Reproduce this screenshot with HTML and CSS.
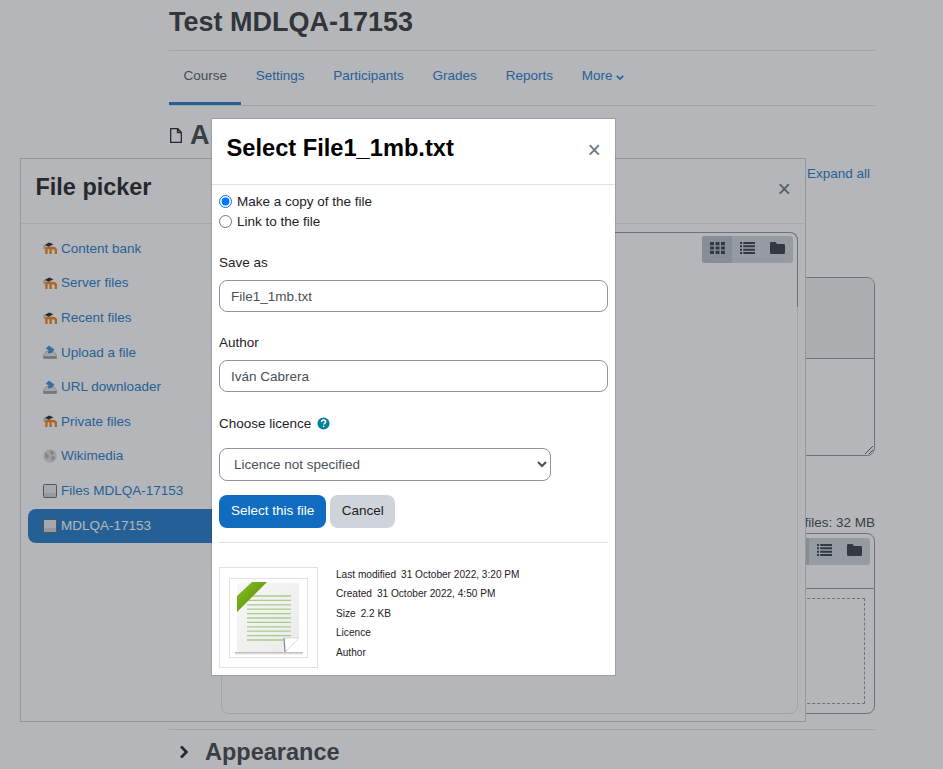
FILE: index.html
```html
<!DOCTYPE html>
<html lang="en">
<head>
<meta charset="utf-8">
<title>File picker</title>
<link rel="stylesheet" href="styles.css">
</head>
<body>
<svg class="defs" width="0" height="0">
  <symbol id="i-moodle" viewBox="0 0 14 12">
    <path d="M3.400 12V6h6.400q3.100 0 3.100 2.800V12M7.600 6v6" fill="none" stroke="#f98012" stroke-width="2.400"/>
    <path d="M1.600 3 6.200.4 10.400 2.200 5.800 4.800z" fill="#222"/>
    <path d="M1.200 3.200V7" stroke="#777" stroke-width=".8"/>
  </symbol>
  <symbol id="i-upload" viewBox="0 0 14 14">
    <path d="M3.500 6.500.6 10v3.500h12.800V10l-2.900-3.500z" fill="#e4e6e8" stroke="#9a9fa3" stroke-width=".7"/>
    <path d="M.6 11h12.800v2.500H.6z" fill="#9a9fa3"/>
    <path d="M2.800 3.600 6 .4l3.800 3.200 1.800.4-2.800 4-4 .4.800-2.900z" fill="#3d8ad6"/>
  </symbol>
  <symbol id="i-wiki" viewBox="0 0 14 14">
    <circle cx="7" cy="7" r="6.700" fill="#dcdcdc"/>
    <path d="M2 4l3 1 1 3-2 2-2-2zM7 1.500l3 .5 1 3-3 1zM8 8l3-1 1 2-3 3z" fill="#b2b2b2"/>
  </symbol>
  <symbol id="i-drive" viewBox="0 0 14 14">
    <rect x=".5" y=".5" width="13" height="13" rx=".8" fill="#e8eaec" stroke="#666" stroke-width="1"/>
    <rect x="1" y="9" width="12" height="4" fill="#d0d3d6"/>
  </symbol>
  <symbol id="i-grid" viewBox="0 0 15 13" preserveAspectRatio="none">
    <path d="M0 0h4v3.500H0zM5.500 0h4v3.500h-4zM11 0h4v3.500h-4zM0 4.800h4v3.400H0zM5.500 4.800h4v3.400h-4zM11 4.800h4v3.400h-4zM0 9.500h4V13H0zM5.500 9.500h4V13h-4zM11 9.500h4V13h-4z" fill="#343a40"/>
  </symbol>
  <symbol id="i-list" viewBox="0 0 15 13" preserveAspectRatio="none">
    <path d="M0 0h2v2.200H0zM3.200 0H15v2.200H3.200zM0 3.600h2v2.200H0zM3.200 3.600H15v2.200H3.200zM0 7.200h2v2.200H0zM3.200 7.200H15v2.200H3.200zM0 10.800h2V13H0zM3.200 10.800H15V13H3.200z" fill="#343a40"/>
  </symbol>
  <symbol id="i-folder" viewBox="0 0 15 12" preserveAspectRatio="none">
    <path d="M1.200 0h4.300l1.600 2h6.700q1.200 0 1.200 1.200v7.600q0 1.200-1.200 1.200H1.200Q0 12 0 10.800V1.200Q0 0 1.200 0z" fill="#343a40"/>
  </symbol>
</svg>

<div class="page">
  <h1 class="course-title">Test MDLQA-17153</h1>
  <nav class="tabs">
    <a class="tab tab-active">Course</a>
    <a class="tab">Settings</a>
    <a class="tab">Participants</a>
    <a class="tab">Grades</a>
    <a class="tab">Reports</a>
    <a class="tab">More <svg class="caret" viewBox="0 0 10 6"><path d="M1 1l4 4 4-4" fill="none" stroke="currentColor" stroke-width="2"/></svg></a>
  </nav>
  <div class="activity-head">
    <svg class="page-icon" viewBox="0 0 12 15"><path d="M.7.7h7l3.600 3.600v10H.7zM7.500.7v3.800h3.800" fill="none" stroke="#1d2125" stroke-width="1.300"/></svg>
    <h2 class="activity-title">A</h2>
  </div>
  <div class="expand-row"><a class="expand-all">Expand all</a></div>
  <div class="editor">
    <div class="editor-bar"></div>
    <div class="editor-text">
      <svg class="resize" viewBox="0 0 8 8"><path d="M0 8 8 0M4 8l4-4" stroke="#555" stroke-width="1"/></svg>
    </div>
  </div>
  <div class="limit">Maximum size for new files: 32 MB</div>
  <div class="manager">
    <div class="manager-bar">
      <div class="views views-manager">
        <span class="view view-on"><svg class="vi"><use href="#i-grid"/></svg></span>
        <span class="view"><svg class="vi"><use href="#i-list"/></svg></span>
        <span class="view"><svg class="vi"><use href="#i-folder"/></svg></span>
      </div>
    </div>
    <div class="manager-body"><div class="dropzone"></div></div>
  </div>
  <div class="section">
    <svg class="chevron" viewBox="0 0 10 14"><path d="M2 1.500 7.500 7 2 12.500" fill="none" stroke="#1d2125" stroke-width="2.600"/></svg>
    <h3 class="section-title">Appearance</h3>
  </div>
</div>

<section class="picker">
  <header class="picker-head">
    <h2 class="picker-title">File picker</h2>
    <span class="close picker-close">×</span>
  </header>
  <div class="picker-body">
    <ul class="repos">
      <li class="repo"><svg class="ri"><use href="#i-moodle"/></svg>Content bank</li>
      <li class="repo"><svg class="ri"><use href="#i-moodle"/></svg>Server files</li>
      <li class="repo"><svg class="ri"><use href="#i-moodle"/></svg>Recent files</li>
      <li class="repo"><svg class="ri"><use href="#i-upload"/></svg>Upload a file</li>
      <li class="repo"><svg class="ri"><use href="#i-upload"/></svg>URL downloader</li>
      <li class="repo"><svg class="ri"><use href="#i-moodle"/></svg>Private files</li>
      <li class="repo"><svg class="ri"><use href="#i-wiki"/></svg>Wikimedia</li>
      <li class="repo"><svg class="ri"><use href="#i-drive"/></svg>Files MDLQA-17153</li>
      <li class="repo repo-active"><svg class="ri"><use href="#i-drive"/></svg>MDLQA-17153</li>
    </ul>
    <div class="browser">
      <div class="browser-top">
        <div class="views">
          <span class="view view-on"><svg class="vi"><use href="#i-grid"/></svg></span>
          <span class="view"><svg class="vi"><use href="#i-list"/></svg></span>
          <span class="view"><svg class="vi"><use href="#i-folder"/></svg></span>
        </div>
      </div>
    </div>
  </div>
</section>

<div class="backdrop"></div>

<section class="dialog">
  <header class="dialog-head">
    <h2 class="dialog-title">Select File1_1mb.txt</h2>
    <span class="close dialog-close">×</span>
  </header>
  <form class="dialog-body">
    <label class="radio"><input type="radio" name="how" checked>Make a copy of the file</label>
    <label class="radio"><input type="radio" name="how">Link to the file</label>
    <div class="field field-first">
      <label class="field-label">Save as</label>
      <input class="text-input" type="text" value="File1_1mb.txt">
    </div>
    <div class="field">
      <label class="field-label">Author</label>
      <input class="text-input" type="text" value="Iván Cabrera">
    </div>
    <div class="licence-label">Choose licence
      <svg class="help" viewBox="0 0 14 14"><circle cx="7" cy="7" r="6.500" fill="#008196"/><path d="M4.900 5.400Q5 3.300 7.100 3.300q2.200 0 2.200 1.900 0 1.100-1.100 1.700-.8.5-.8 1.300" fill="none" stroke="#fff" stroke-width="1.600"/><rect x="6.300" y="9.200" width="1.600" height="1.700" fill="#fff"/></svg>
    </div>
    <select class="licence"><option>Licence not specified</option></select>
    <div class="actions">
      <button class="btn btn-primary" type="button">Select this file</button>
      <button class="btn btn-secondary" type="button">Cancel</button>
    </div>
    <hr class="rule">
    <div class="details">
      <div class="thumb">
        <div class="thumb-inner">
          <svg class="doc" viewBox="0 0 77 78">
            <defs>
              <linearGradient id="paper" x1="0" y1="0" x2="1" y2="1"><stop offset="0" stop-color="#f7f7f6"/><stop offset="1" stop-color="#e9eae9"/></linearGradient>
              <linearGradient id="ribbon" x1="0" y1="0" x2="1" y2="1"><stop offset="0" stop-color="#8cc020"/><stop offset="1" stop-color="#4a860c"/></linearGradient>
              <linearGradient id="shade" x1="0" y1="0" x2="0" y2="1"><stop offset="0" stop-color="#b4b4b4"/><stop offset="1" stop-color="#fff"/></linearGradient>
            </defs>
            <path d="M5 73h68v3H5z" fill="url(#shade)"/>
            <path d="M10 4h56q3 0 3 3v52L55 73H10q-3 0-3-3V7q0-3 3-3z" fill="url(#paper)"/>
            <path d="M55 73l-1-14h15z" fill="#fff" stroke="#c8c8c8" stroke-width=".6"/>
            <path d="M54 59l1 14" stroke="#8a8a8a" stroke-width="1.200"/>
            <g stroke="#a9cb8c" stroke-width="1.300">
              <path d="M17 17h44M17 21.400h44M17 25.800h44M17 30.200h44M17 34.600h44M17 39h44M17 43.400h44M17 47.800h44M17 52.200h44M17 56.600h44M17 61h36"/>
            </g>
            <path d="M7 33V17L22 3h15L15 25q-5 5-8 8z" fill="url(#ribbon)"/>
          </svg>
        </div>
      </div>
      <ul class="meta">
        <li class="meta-row"><span>Last modified</span><span>31 October 2022, 3:20 PM</span></li>
        <li class="meta-row"><span>Created</span><span>31 October 2022, 4:50 PM</span></li>
        <li class="meta-row"><span>Size</span><span>2.2 KB</span></li>
        <li class="meta-row"><span>Licence</span></li>
        <li class="meta-row"><span>Author</span></li>
      </ul>
    </div>
  </form>
</section>
</body>
</html>
```
FILE: styles.css
```css
* { box-sizing: border-box; }
html, body { margin: 0; padding: 0; }
body {
  position: relative;
  width: 943px;
  height: 769px;
  overflow: hidden;
  background: #fff;
  color: #1d2125;
  font-family: "Liberation Sans", Arial, sans-serif;
  font-size: 13.5px;
}
.defs { position: absolute; }
h1, h2, h3, ul { margin: 0; padding: 0; }
ul { list-style: none; }

.page { width: 706px; margin-left: 169px; color: #323436; }
.course-title {
  height: 51px;
  padding-top: 6px;
  border-bottom: 1px solid #dee2e6;
  font-size: 27px;
  line-height: 32px;
}
.tabs {
  display: flex;
  height: 55px;
  border-bottom: 1px solid #dee2e6;
}
.tab {
  padding: 0 14.400px;
  line-height: 50px;
  color: #1c78c8;
  height: 54px;
}
.tab-active { color: #505a64; border-bottom: 3px solid #1c78c8; }
.caret { width: 8px; height: 5px; }
.activity-head { display: flex; align-items: center; margin: 13px 0 0 1px; height: 33px; gap: 8px; }
.page-icon { width: 12px; height: 15px; }
.activity-title { font-size: 27px; line-height: 33px; white-space: nowrap; color: #3c4247; }
.expand-row { display: flex; justify-content: flex-end; padding-right: 5px; margin-top: 13px; height: 17px; line-height: 17px; }
.expand-all { color: #1c78c8; }
.editor { margin-top: 95px; height: 179px; border: 1px solid #8f959e; border-radius: 8px; overflow: hidden; }
.editor-bar { height: 81px; background: #f3f3f3; border-bottom: 1px solid #8f959e; }
.editor-text { position: relative; height: 96px; }
.resize { position: absolute; right: 1px; bottom: 1px; width: 8px; height: 8px; }
.limit { margin-top: 58px; height: 19px; line-height: 18px; text-align: right; color: #3c4247; }
.manager { height: 181px; border: 1px solid #8f959e; border-radius: 8px; overflow: hidden; }
.manager-bar { height: 55px; border-bottom: 1px solid #8f959e; display: flex; justify-content: flex-end; padding: 4px 4px 0 0; }
.manager-body { padding: 9px; }
.dropzone { height: 106px; border: 1px dashed #8f959e; }
.section { display: flex; align-items: center; margin-top: 15px; height: 48px; border-top: 1px solid #dee2e6; padding: 0 0 4px 10px; gap: 16px; }
.chevron { width: 10px; height: 14px; }
.section-title { font-size: 23.500px; line-height: 46px; color: #3c4247; }

.views { display: flex; height: 27px; background: #ced4da; border-radius: 3px; overflow: hidden; }
.view { width: 30.400px; display: flex; align-items: center; justify-content: center; padding-bottom: 3px; }
.view-on { background: #b8bfc6; }
.vi { width: 15px; height: 12px; }

.picker {
  position: absolute;
  left: 20px; top: 158px;
  width: 786px; height: 564px;
  background: #fff;
  border: 1px solid #cdd0d2;
}
.picker-head { display: flex; justify-content: space-between; height: 65px; border-bottom: 1px solid #e9ecef; padding: 0 14px 0 14.500px; }
.picker-title { font-size: 23.440px; line-height: 56px; }
.close { font-size: 23px; color: #6a737b; }
.picker-close { line-height: 60px; }
.picker-body { display: flex; height: 497px; }
.repos { width: 200px; padding: 7.600px 0 0 7px; }
.repo { display: flex; align-items: center; gap: 4px; height: 34.600px; padding: 0 0 1px 15px; color: #1c78c8; width: 185px; }
.ri { width: 14px; height: 14px; flex: none; }
.repo-active { margin-top: .4px; background: #1c78c8; color: #fff; border-radius: 8px 0 0 8px; }
.browser { width: 577px; height: 482px; margin-top: 8px; border: 1px solid #dee2e6; border-radius: 8px; position: relative; }
.browser-top {
  position: absolute;
  left: -1px; right: -1px; top: -1px;
  height: 75px;
  border: 1px solid #8f959e;
  border-bottom: 0; border-left: 0;
  border-top-right-radius: 8px;
  display: flex;
  justify-content: flex-end;
  padding: 3px 4px 0 0;
  align-items: flex-start;
}

.backdrop { position: absolute; inset: 0; background: rgba(52, 58, 64, .37); }

.dialog {
  position: absolute;
  left: 212px; top: 119px;
  width: 403px; height: 556px;
  background: #fff;
  color: #1d2125;
  box-shadow: 0 0 0 1px rgba(0, 0, 0, .12);
}
.dialog-head { display: flex; justify-content: space-between; height: 66px; border-bottom: 1px solid #dee2e6; padding: 0 14px 0 14.500px; }
.dialog-title { font-size: 23.650px; line-height: 58px; color: #000; }
.dialog-close { line-height: 62px; }
.dialog-body { padding: 6px 7px 0 7px; }
.radio { display: flex; align-items: center; height: 20px; gap: 5px; }
.radio input { width: 13px; height: 13px; margin: 0; }
.field { margin-top: 21px; }
.field-first { margin-top: 22px; }
.field-label { display: block; height: 27px; line-height: 20px; }
.text-input {
  display: block;
  width: 389px; height: 32px;
  border: 1px solid #8f959e;
  border-radius: 8px;
  padding: 0 11px;
  font: inherit;
  color: #495057;
}
.licence-label { display: flex; align-items: center; gap: 6px; margin-top: 22px; height: 18px; }
.help { width: 13px; height: 13px; }
.licence {
  display: block;
  width: 332px; height: 33px;
  margin-top: 16px;
  border: 1px solid #8f959e;
  border-radius: 8px;
  padding: 0 10px;
  background: #fff;
  font: inherit;
  color: #495057;
}
.actions { display: flex; gap: 4px; margin-top: 14px; }
.btn { height: 33px; border: 0; border-radius: 8px; padding: 0 12px 2px; font: inherit; }
.btn-primary { background: #0f6cbf; color: #fff; }
.btn-secondary { background: #ced4da; color: #1d2125; padding: 0 11.500px 2px; }
.rule { margin: 14px 0 24px; border: 0; border-top: 1px solid #dee2e6; }
.details { display: flex; gap: 18px; }
.thumb { width: 99px; height: 101px; border: 1px solid #dee2e6; padding: 10px 9px 9px 9px; }
.thumb-inner { width: 79px; height: 80px; border: 1px solid #dee2e6; }
.doc { display: block; width: 77px; height: 78px; }
.meta { margin-top: -2.500px; font-size: 10.100px; }
.meta-row { display: flex; gap: 5px; height: 19.600px; line-height: 19.600px; }
```
